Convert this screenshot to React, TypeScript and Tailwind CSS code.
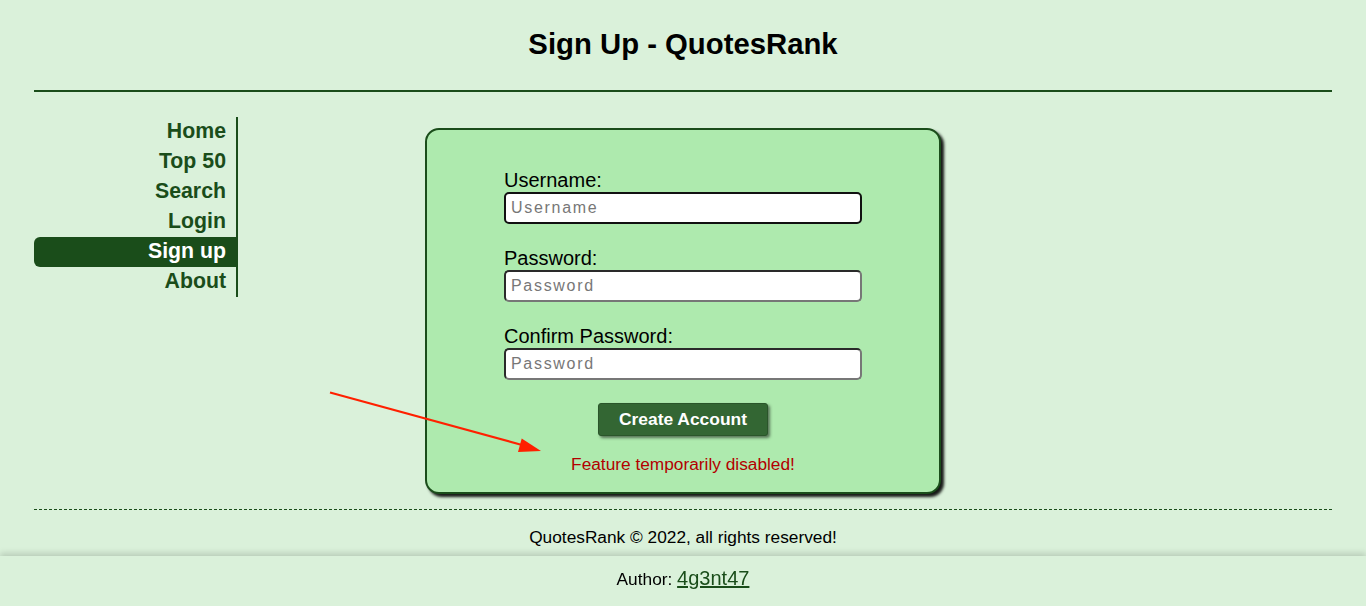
import React from 'react';

const navItems = ['Home', 'Top 50', 'Search', 'Login', 'Sign up', 'About'];

const Field: React.FC<{ label: string; placeholder: string; focused?: boolean; type?: string }> = ({
  label,
  placeholder,
  focused = false,
  type = 'text',
}) => (
  <div className="flex flex-col">
    <label className="text-[20px] leading-[23px] text-black">{label}</label>
    <input
      type={type}
      placeholder={placeholder}
      className={`h-[32px] w-full rounded-[5px] border-2 bg-white px-[5px] text-[16px] tracking-[1.7px] text-black placeholder:text-[#777] outline-none ${
        focused
          ? 'border-[#111]'
          : 'border-t-[#2a2a2a] border-l-[#2a2a2a] border-b-[#777] border-r-[#777]'
      }`}
    />
  </div>
);

export default function App() {
  return (
    <div className="relative min-h-screen bg-[#daf1da] font-['Liberation_Sans',Arial,sans-serif] text-black">
      <div className="mx-[34px]">
        {/* Header */}
        <header className="pt-[28px] pb-[30px] text-center">
          <h1 className="text-[29.3px] leading-[32px] font-bold">Sign Up - QuotesRank</h1>
        </header>
        <div className="h-[2px] bg-[#1a4d1a]" />

        {/* Body */}
        <div className="grid grid-cols-[204px_1fr_204px] pt-[25px]">
          <nav className="flex flex-col self-start border-r-2 border-[#1a4d1a]">
            {navItems.map((item) => (
              <a
                key={item}
                href="#"
                className={`block h-[30px] pr-[10px] text-right text-[21.3px] leading-[28px] font-bold ${
                  item === 'Sign up'
                    ? 'rounded-l-[6px] bg-[#1a4d1a] text-white'
                    : 'text-[#1a4d1a]'
                }`}
              >
                {item}
              </a>
            ))}
          </nav>

          <main className="flex justify-center pt-[11px]">
            <div className="w-[516px] rounded-[14px] border-2 border-[#1a4d1a] bg-[#aeeaae] pt-[39px] pb-[18px] shadow-[3px_3px_3px_rgba(0,0,0,0.9)]">
              <form className="mx-auto flex w-[358px] flex-col gap-[23px]" onSubmit={(e) => e.preventDefault()}>
                <Field label="Username:" placeholder="Username" focused />
                <Field label="Password:" placeholder="Password" type="password" />
                <Field label="Confirm Password:" placeholder="Password" type="password" />
                <div className="flex justify-center">
                  <button
                    type="submit"
                    className="h-[33px] w-[170px] rounded-[3px] border border-[#2a552a] bg-[#336633] text-[17.4px] font-bold text-white shadow-[2px_2px_3px_rgba(0,0,0,0.5)]"
                  >
                    Create Account
                  </button>
                </div>
              </form>
              <p className="mt-[18px] text-center text-[17.3px] leading-[20px] text-[#b30000]">
                Feature temporarily disabled!
              </p>
            </div>
          </main>
          <div />
        </div>

        {/* Footer */}
        <div className="mt-[15px] border-t border-dashed border-[#1a4d1a]" />
        <p className="pt-[17px] text-center text-[17.3px] leading-[20px]">
          QuotesRank © 2022, all rights reserved!
        </p>
      </div>

      <div className="fixed right-0 bottom-0 left-0 flex h-[50px] items-center justify-center bg-[#daf1da] pb-[6px] text-[17.3px] shadow-[0_-3px_6px_rgba(0,0,0,0.15)]">
        <span>
          Author:{' '}
          <a href="#" className="text-[20px] text-[#1a4d1a] underline">
            4g3nt47
          </a>
        </span>
      </div>

      {/* annotation arrow */}
      <svg
        className="pointer-events-none absolute top-0 left-0"
        width="1366"
        height="606"
        viewBox="0 0 1366 606"
      >
        <line x1="330" y1="392.5" x2="522" y2="445" stroke="#ff2000" strokeWidth="2.2" />
        <polygon points="541,451 518,452 521.7,438.5" fill="#ff2000" />
      </svg>
    </div>
  );
}
